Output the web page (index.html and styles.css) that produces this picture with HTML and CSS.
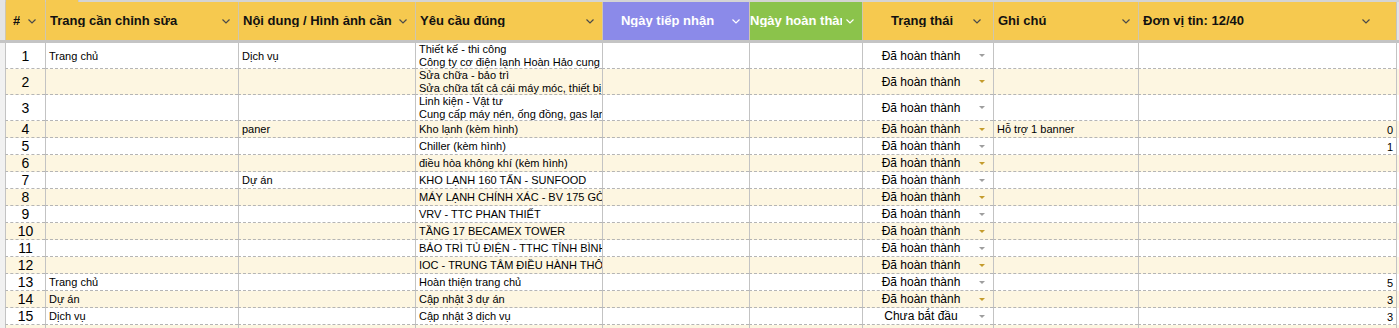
FILE: index.html
```html
<!DOCTYPE html>
<html lang="vi">
<head>
<meta charset="utf-8">
<link rel="stylesheet" href="styles.css">
</head>
<body>
<div class="sheet">
  <div class="strip">
    <div class="g"></div><div class="sc"></div><div class="sc sc2"></div><div class="rest"></div>
  </div>
  <div class="row head">
    <div class="g"></div>
    <div class="c hc hnum"><span class="ht">#</span><svg class="chev" viewBox="0 0 8 5"><polyline points="0.5,0.5 4,4 7.5,0.5"/></svg></div>
    <div class="c hc"><span class="ht">Trang cần chỉnh sửa</span><svg class="chev" viewBox="0 0 8 5"><polyline points="0.5,0.5 4,4 7.5,0.5"/></svg></div>
    <div class="c hc"><span class="ht">Nội dung / Hình ảnh cần chỉnh sửa</span><svg class="chev" viewBox="0 0 8 5"><polyline points="0.5,0.5 4,4 7.5,0.5"/></svg></div>
    <div class="c hc"><span class="ht">Yêu cầu đúng</span><svg class="chev" viewBox="0 0 8 5"><polyline points="0.5,0.5 4,4 7.5,0.5"/></svg></div>
    <div class="c hc purple"><span class="ht ctr">Ngày tiếp nhận</span><svg class="chev w" viewBox="0 0 8 5"><polyline points="0.5,0.5 4,4 7.5,0.5"/></svg></div>
    <div class="c hc green"><span class="ht">Ngày hoàn thành</span><svg class="chev w" viewBox="0 0 8 5"><polyline points="0.5,0.5 4,4 7.5,0.5"/></svg></div>
    <div class="c hc hstat"><span class="ht ctr">Trạng thái</span><svg class="chev" viewBox="0 0 8 5"><polyline points="0.5,0.5 4,4 7.5,0.5"/></svg></div>
    <div class="c hc"><span class="ht">Ghi chú</span><svg class="chev" viewBox="0 0 8 5"><polyline points="0.5,0.5 4,4 7.5,0.5"/></svg></div>
    <div class="c hc hlast"><span class="ht">Đơn vị tin: 12/40</span><svg class="chev" viewBox="0 0 8 5"><polyline points="0.5,0.5 4,4 7.5,0.5"/></svg></div>
    <div class="c hend"></div>
  </div>
  <div class="sep"></div>

  <div class="row tall">
    <div class="g"></div><div class="c num">1</div><div class="c">Trang chủ</div><div class="c">Dịch vụ</div>
    <div class="c multi"><span>Thiết kế - thi công</span><span>Công ty cơ điện lạnh Hoàn Hảo cung cấp dịch vụ thiết kế</span></div>
    <div class="c"></div><div class="c"></div>
    <div class="c stat"><span class="st">Đã hoàn thành</span><i class="tri"></i></div>
    <div class="c"></div><div class="c val"></div><div class="c end"></div>
  </div>
  <div class="row tall alt">
    <div class="g"></div><div class="c num">2</div><div class="c"></div><div class="c"></div>
    <div class="c multi"><span>Sửa chữa - bảo trì</span><span>Sửa chữa tất cả cái máy móc, thiết bị nhiệt lạnh</span></div>
    <div class="c"></div><div class="c"></div>
    <div class="c stat"><span class="st">Đã hoàn thành</span><i class="tri"></i></div>
    <div class="c"></div><div class="c val"></div><div class="c end"></div>
  </div>
  <div class="row tall">
    <div class="g"></div><div class="c num">3</div><div class="c"></div><div class="c"></div>
    <div class="c multi"><span>Linh kiện - Vật tư</span><span>Cung cấp máy nén, ống đồng, gas lạnh chính hãng</span></div>
    <div class="c"></div><div class="c"></div>
    <div class="c stat"><span class="st">Đã hoàn thành</span><i class="tri"></i></div>
    <div class="c"></div><div class="c val"></div><div class="c end"></div>
  </div>
  <div class="row alt">
    <div class="g"></div><div class="c num">4</div><div class="c"></div><div class="c">paner</div>
    <div class="c">Kho lạnh (kèm hình)</div>
    <div class="c"></div><div class="c"></div>
    <div class="c stat"><span class="st">Đã hoàn thành</span><i class="tri"></i></div>
    <div class="c">Hỗ trợ 1 banner</div><div class="c val">0</div><div class="c end"></div>
  </div>
  <div class="row">
    <div class="g"></div><div class="c num">5</div><div class="c"></div><div class="c"></div>
    <div class="c">Chiller (kèm hình)</div>
    <div class="c"></div><div class="c"></div>
    <div class="c stat"><span class="st">Đã hoàn thành</span><i class="tri"></i></div>
    <div class="c"></div><div class="c val">1</div><div class="c end"></div>
  </div>
  <div class="row alt">
    <div class="g"></div><div class="c num">6</div><div class="c"></div><div class="c"></div>
    <div class="c">điều hòa không khí (kèm hình)</div>
    <div class="c"></div><div class="c"></div>
    <div class="c stat"><span class="st">Đã hoàn thành</span><i class="tri"></i></div>
    <div class="c"></div><div class="c val"></div><div class="c end"></div>
  </div>
  <div class="row">
    <div class="g"></div><div class="c num">7</div><div class="c"></div><div class="c">Dự án</div>
    <div class="c">KHO LẠNH 160 TẤN - SUNFOOD</div>
    <div class="c"></div><div class="c"></div>
    <div class="c stat"><span class="st">Đã hoàn thành</span><i class="tri"></i></div>
    <div class="c"></div><div class="c val"></div><div class="c end"></div>
  </div>
  <div class="row alt">
    <div class="g"></div><div class="c num">8</div><div class="c"></div><div class="c"></div>
    <div class="c">MÁY LẠNH CHÍNH XÁC - BV 175 GÒ VẤP</div>
    <div class="c"></div><div class="c"></div>
    <div class="c stat"><span class="st">Đã hoàn thành</span><i class="tri"></i></div>
    <div class="c"></div><div class="c val"></div><div class="c end"></div>
  </div>
  <div class="row">
    <div class="g"></div><div class="c num">9</div><div class="c"></div><div class="c"></div>
    <div class="c">VRV - TTC PHAN THIẾT</div>
    <div class="c"></div><div class="c"></div>
    <div class="c stat"><span class="st">Đã hoàn thành</span><i class="tri"></i></div>
    <div class="c"></div><div class="c val"></div><div class="c end"></div>
  </div>
  <div class="row alt">
    <div class="g"></div><div class="c num">10</div><div class="c"></div><div class="c"></div>
    <div class="c">TẦNG 17 BECAMEX TOWER</div>
    <div class="c"></div><div class="c"></div>
    <div class="c stat"><span class="st">Đã hoàn thành</span><i class="tri"></i></div>
    <div class="c"></div><div class="c val"></div><div class="c end"></div>
  </div>
  <div class="row">
    <div class="g"></div><div class="c num">11</div><div class="c"></div><div class="c"></div>
    <div class="c">BẢO TRÌ TỦ ĐIỆN - TTHC TỈNH BÌNH DƯƠNG</div>
    <div class="c"></div><div class="c"></div>
    <div class="c stat"><span class="st">Đã hoàn thành</span><i class="tri"></i></div>
    <div class="c"></div><div class="c val"></div><div class="c end"></div>
  </div>
  <div class="row alt">
    <div class="g"></div><div class="c num">12</div><div class="c"></div><div class="c"></div>
    <div class="c">IOC - TRUNG TÂM ĐIỀU HÀNH THÔNG MINH</div>
    <div class="c"></div><div class="c"></div>
    <div class="c stat"><span class="st">Đã hoàn thành</span><i class="tri"></i></div>
    <div class="c"></div><div class="c val"></div><div class="c end"></div>
  </div>
  <div class="row">
    <div class="g"></div><div class="c num">13</div><div class="c">Trang chủ</div><div class="c"></div>
    <div class="c">Hoàn thiện trang chủ</div>
    <div class="c"></div><div class="c"></div>
    <div class="c stat"><span class="st">Đã hoàn thành</span><i class="tri"></i></div>
    <div class="c"></div><div class="c val">5</div><div class="c end"></div>
  </div>
  <div class="row alt">
    <div class="g"></div><div class="c num">14</div><div class="c">Dự án</div><div class="c"></div>
    <div class="c">Cập nhật 3 dự án</div>
    <div class="c"></div><div class="c"></div>
    <div class="c stat"><span class="st">Đã hoàn thành</span><i class="tri"></i></div>
    <div class="c"></div><div class="c val">3</div><div class="c end"></div>
  </div>
  <div class="row">
    <div class="g"></div><div class="c num">15</div><div class="c">Dịch vụ</div><div class="c"></div>
    <div class="c">Cập nhật 3 dịch vụ</div>
    <div class="c"></div><div class="c"></div>
    <div class="c stat"><span class="st">Chưa bắt đầu</span><i class="tri"></i></div>
    <div class="c"></div><div class="c val">3</div><div class="c end"></div>
  </div>
  <div class="row alt">
    <div class="g"></div><div class="c num">16</div><div class="c"></div><div class="c"></div>
    <div class="c">Cập nhật 3 tin tức</div>
    <div class="c"></div><div class="c"></div>
    <div class="c stat"><span class="st">Đã hoàn thành</span><i class="tri"></i></div>
    <div class="c"></div><div class="c val">3</div><div class="c end"></div>
  </div>
</div>
</body>
</html>
```

FILE: styles.css
```css
* { box-sizing: border-box; }
html, body { margin: 0; padding: 0; }
body {
  width: 1399px;
  height: 328px;
  overflow: hidden;
  background: #ffffff;
  font-family: "Liberation Sans", Arial, sans-serif;
  color: #000;
}
.sheet { display: flex; flex-direction: column; }

.strip {
  display: grid;
  grid-template-columns: 5px 40px 33px 33px 1fr;
  height: 2px;
  background: #d4d4d4;
}
.strip .g { background: #e4e4e4; }
.strip .sc { background: #f6c94f; border-left: 1px solid #c9c9c9; }
.strip .rest { background: #d4d4d4; border-left: 1px solid #c9c9c9; }

.row {
  display: grid;
  grid-template-columns: 5px 40px 193px 177px 187px 147px 113px 131px 145px 258px 1fr;
  height: 17px;
  background: #ffffff;
}
.row.alt { background: #fdf6e1; }
.row.tall { height: 26px; }

.g { background: #f1f1f1; }

.c {
  border-left: 1px solid #c3c3c3;
  border-bottom: 1px dashed #b5b5b5;
  overflow: hidden;
  white-space: nowrap;
  display: flex;
  align-items: center;
  padding: 0 3px;
  font-size: 11px;
  line-height: 12px;
  min-width: 0;
}
.c.end { border-bottom: none; }

.num {
  justify-content: center;
  font-size: 14px;
  padding: 0;
}

.multi {
  flex-direction: column;
  align-items: flex-start;
  justify-content: center;
  line-height: 13px;
}
.multi span { display: block; white-space: nowrap; }

.stat {
  padding: 0 8px 0 4px;
  font-size: 12px;
}
.st { flex: 1; text-align: center; }
.tri {
  width: 0; height: 0;
  border-left: 3px solid transparent;
  border-right: 3px solid transparent;
  border-top: 3px solid #9e9e9e;
  margin-left: 4px;
}
.alt .tri { border-top-color: #c49b2c; }

.val { justify-content: flex-end; padding-right: 3px; padding-top: 2px; }

/* header */
.head { height: 38px; background: #f6c94f; }
.head .g { background: #e4e4e4; }
.hc {
  background: #f6c94f;
  border-bottom: none;
  border-left: 1px solid #cfc6ae;
  font-size: 13px;
  font-weight: bold;
  padding: 0 8px 0 4px;
  color: #111;
}
.hend { background: #e4e4e4; border-bottom: none; }
.ht { flex: 1; overflow: hidden; white-space: nowrap; min-width: 0; }
.ht.ctr { text-align: center; }
.hnum { padding-left: 7px; padding-right: 9px; }
.hnum .ht { flex: 0 0 auto; margin-right: auto; }
.chev {
  width: 8px; height: 5px;
  flex: 0 0 8px;
  margin-left: 4px;
  fill: none;
  stroke: #4a4a4a;
  stroke-width: 1.2;
}
.chev.w { stroke: #ffffff; }
.purple { background: #8b8ae9; color: #ffffff; padding-right: 9px; }
.green { background: #8bc34b; color: #ffffff; padding-left: 0; padding-right: 8px; }
.hstat { padding-right: 12px; padding-left: 12px; }
.hlast { padding-right: 26px; }

.sep { height: 3px; background: #c4c4c4; }
```
